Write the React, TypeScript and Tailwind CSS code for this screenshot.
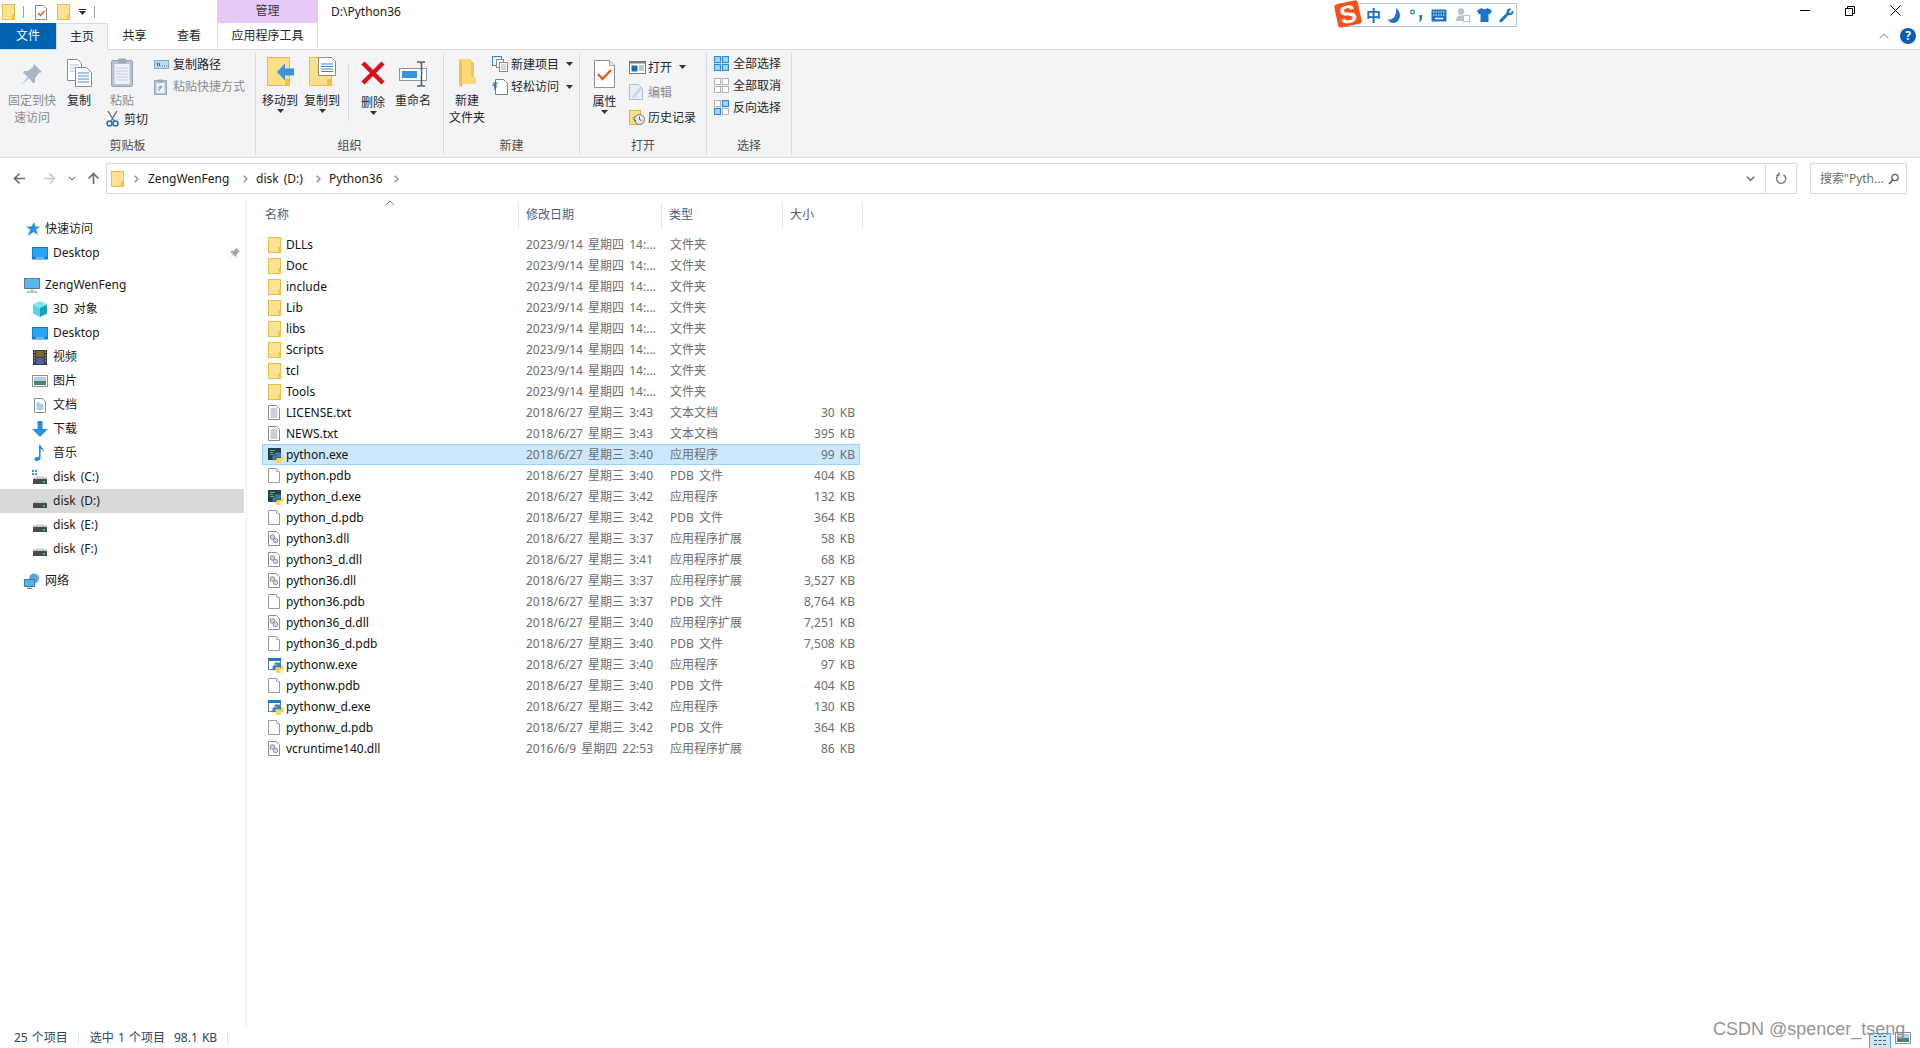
import React from "react";

const Folder = ({ w = 13, h = 16 }: { w?: number; h?: number }) => (
  <svg width={w} height={h} viewBox="0 0 13 16" className="shrink-0">
    <rect x="0.5" y="0.5" width="12" height="15" fill="#ffe293" stroke="#e6bc4a" />
    <rect x="10" y="10" width="2.5" height="5.5" fill="#f3c84f" />
  </svg>
);

const TxtIcon = () => (
  <svg width="12" height="15" viewBox="0 0 12 15" className="shrink-0">
    <path d="M.5.5h8l3 3v11H.5z" fill="#fff" stroke="#8a8a8a" />
    <path d="M2.5 4h7M2.5 6h7M2.5 8h7M2.5 10h7M2.5 12h7" stroke="#a0a0a0" />
  </svg>
);
const BlankIcon = () => (
  <svg width="12" height="15" viewBox="0 0 12 15" className="shrink-0">
    <path d="M.5.5h8l3 3v11H.5z" fill="#fff" stroke="#9a9a9a" />
    <path d="M8.5.5v3h3" fill="#f0f0f0" stroke="#b5b5b5" />
  </svg>
);
const DllIcon = () => (
  <svg width="12" height="15" viewBox="0 0 12 15" className="shrink-0">
    <path d="M.5.5h8l3 3v11H.5z" fill="#fff" stroke="#8e8e8e" />
    <circle cx="4.5" cy="6" r="2.3" fill="#d5d5d5" stroke="#8b8b8b" />
    <circle cx="7.5" cy="9.5" r="2.3" fill="#c9dcef" stroke="#8b97a5" />
  </svg>
);
const PyLogo = () => (
  <>
    <path d="M8 5.5h3.4c1 0 1.6.7 1.6 1.6V9c0 .9-.7 1.5-1.6 1.5H8.8c-1 0-1.6.7-1.6 1.6v1.2H5.8c-.9 0-1.3-.8-1.3-1.9v-1.2c0-1.1.6-1.9 1.6-1.9h3.3v-.6H6.6V6.6C6.6 5.9 7.2 5.5 8 5.5z" fill="#3e7fb8" />
    <path d="M13.4 8h1.1c.9 0 1.2.8 1.2 1.9v1.4c0 1.1-.6 1.8-1.6 1.8h-3.2v.6h2.3v1.2c0 .8-.7 1.1-1.6 1.1H9.6c-1 0-1.5-.6-1.5-1.5v-2c0-.9.6-1.4 1.5-1.4h2.3c1 0 1.5-.6 1.5-1.6z" fill="#ffd343" />
  </>
);
const PyExe = () => (
  <svg width="16" height="16" viewBox="0 0 16 16" className="shrink-0">
    <rect x="0" y="1" width="13" height="12" fill="#2b3c52" />
    <path d="M2 3.5h5M2 5.5h3M2 7.5h4" stroke="#47c94f" />
    <PyLogo />
  </svg>
);
const PywExe = () => (
  <svg width="16" height="16" viewBox="0 0 16 16" className="shrink-0">
    <rect x="0.5" y="1.5" width="12" height="11" fill="#fff" stroke="#6c7f96" />
    <rect x="0" y="1" width="13" height="3" fill="#1c78c9" />
    <PyLogo />
  </svg>
);

const Desktop = () => (
  <svg width="16" height="13" viewBox="0 0 16 13" className="shrink-0">
    <rect width="16" height="12.5" fill="#0b7bd4" />
    <path d="M1 1h14v9H1z" fill="#28a4f0" />
    <path d="M4 11h8" stroke="#cfe9fb" />
  </svg>
);
const ThisPC = () => (
  <svg width="16" height="15" viewBox="0 0 16 15" className="shrink-0">
    <rect x="0.5" y="0.5" width="15" height="10" fill="#5cb6ee" stroke="#5a7a96" />
    <path d="M8 11v2M3 14h10" stroke="#9aa7b3" strokeWidth="1.5" />
  </svg>
);
const Cube = () => (
  <svg width="16" height="16" viewBox="0 0 16 16" className="shrink-0">
    <path d="M8 0l7 3.5L8 7 1 3.5z" fill="#7fe5ee" />
    <path d="M1 3.5L8 7v9l-7-3.5z" fill="#58d3e2" />
    <path d="M15 3.5L8 7v9l7-3.5z" fill="#1a9fb8" />
  </svg>
);
const Film = () => (
  <svg width="14" height="15" viewBox="0 0 14 15" className="shrink-0">
    <rect width="14" height="15" fill="#3a3a3a" />
    <rect x="3" y="1" width="8" height="6" fill="#7a6a2a" />
    <rect x="3" y="8" width="8" height="6" fill="#4c5fb0" />
    <path d="M1 2h1M1 5h1M1 8h1M1 11h1M12 2h1M12 5h1M12 8h1M12 11h1" stroke="#e5e5e5" />
  </svg>
);
const Pic = () => (
  <svg width="16" height="12" viewBox="0 0 16 12" className="shrink-0">
    <rect x="0.5" y="0.5" width="15" height="11" fill="#fff" stroke="#8f8f8f" />
    <rect x="2" y="2" width="12" height="4" fill="#a9cfe9" />
    <path d="M2 6h12v4H2z" fill="#56806a" />
  </svg>
);
const DocIcon = () => (
  <svg width="12" height="15" viewBox="0 0 12 15" className="shrink-0">
    <path d="M.5.5h8l3 3v11H.5z" fill="#fff" stroke="#8a8a8a" />
    <path d="M2.5 5h3M2.5 7h7M2.5 9h7M2.5 11h7" stroke="#4ca5dc" />
  </svg>
);
const Down = () => (
  <svg width="16" height="16" viewBox="0 0 16 16" className="shrink-0">
    <path d="M5.5 0h5v8H16l-8 8-8-8h5.5z" fill="#2b8fdd" />
  </svg>
);
const Music = () => (
  <svg width="12" height="16" viewBox="0 0 12 16" className="shrink-0">
    <path d="M5 0h1.6c.3 2.5 4 3.5 3.4 7-.6-1.700-2-2.500-3.400-3v8.800C6.600 14.700 5 16 3 16s-2.500-1-2.500-2.100C.5 12.500 2.200 11.500 5 11.700z" fill="#1d8fe5" />
  </svg>
);
const Drive = ({ win }: { win?: boolean }) => (
  <svg width="16" height="16" viewBox="0 0 16 16" className="shrink-0">
    {win && <path d="M0 1h2v2H0zM3 1h2v2H3zM0 4h2v2H0zM3 4h2v2H3z" fill="#1ba1e2" />}
    <path d="M1 9c2-2 12-2 14 0v1H1z" fill="#c9c9c9" />
    <rect x="1" y="10" width="14" height="5" fill="#4a4a4a" />
    <rect x="11" y="12" width="2" height="1.500" fill="#5fd35f" />
  </svg>
);
const Star = () => (
  <svg width="16" height="16" viewBox="0 0 16 16" className="shrink-0">
    <path d="M10 1l1.500 4.500H16l-3.800 3L14 14l-4.300-3-6 4 2.500-6.500L2 5.500h5.500z" fill="#2a8fde" />
  </svg>
);
const Net = () => (
  <svg width="16" height="16" viewBox="0 0 16 16" className="shrink-0">
    <circle cx="10" cy="5.500" r="5" fill="#5aa6d8" />
    <rect x="0.500" y="6.500" width="10" height="7" fill="#4fb4ee" stroke="#3f7ea8" />
    <path d="M5.500 13.500v2M3 15.500h5" stroke="#7d8c98" />
  </svg>
);

const PinIcon = ({ w = 24, color = "#a9b5c6" }: { w?: number; color?: string }) => (
  <svg width={w} height={w} viewBox="0 0 24 24" className="shrink-0">
    <path d="M14 1l8 8-3 1-4 5 0 4-2 1-4-5-8 7 7-8-5-4 1-2h4l5-4z" fill={color} />
  </svg>
);
const CopyIcon = () => (
  <svg width="25" height="28" viewBox="0 0 25 28" className="shrink-0">
    <path d="M.5.500h10l4 4v17H.500z" fill="#fff" stroke="#8c8c8c" />
    <path d="M3 6h9M3 9h9M3 12h9" stroke="#9fbce0" />
    <path d="M8.500 8.500h11l5 5v14h-16z" fill="#fff" stroke="#8c8c8c" />
    <path d="M11 14h11M11 17h11M11 20h11M11 23h11" stroke="#4a86cf" />
  </svg>
);
const PasteIcon = () => (
  <svg width="22" height="29" viewBox="0 0 22 29" className="shrink-0">
    <rect x="0.500" y="2.500" width="21" height="26" rx="1.500" fill="#b7c3d4" stroke="#94a3b8" />
    <rect x="3.500" y="6" width="15" height="20" fill="#eef1f6" />
    <path d="M5 10h12M5 13h12M5 16h12M5 19h12M5 22h12" stroke="#c3cede" />
    <rect x="7" y="0.500" width="8" height="5" rx="1" fill="#9aa8ba" />
  </svg>
);
const Scissors = () => (
  <svg width="13" height="16" viewBox="0 0 13 16" className="shrink-0">
    <path d="M2 0l6 10M11 0L5 10" stroke="#6d6d6d" strokeWidth="1.300" fill="none" />
    <circle cx="3.500" cy="12.500" r="2.500" fill="none" stroke="#2272c9" strokeWidth="1.500" />
    <circle cx="9.500" cy="12.500" r="2.500" fill="none" stroke="#2272c9" strokeWidth="1.500" />
  </svg>
);
const PathIcon = () => (
  <svg width="15" height="9" viewBox="0 0 15 9" className="shrink-0">
    <rect x="0.500" y="0.500" width="14" height="8" fill="#bcdcf5" stroke="#7fa9cc" />
    <path d="M3 2.500l1 4M5 2.500l1 4M8 6h.8M10 6h.8M12 6h.8" stroke="#2b4a66" strokeWidth="0.900" />
  </svg>
);
const ShortcutIcon = () => (
  <svg width="13" height="16" viewBox="0 0 13 16" className="shrink-0">
    <rect x="0.500" y="1.500" width="12" height="14" fill="#b5c3d6" stroke="#98a8bd" />
    <rect x="2.500" y="4" width="8" height="10" fill="#eef1f6" />
    <rect x="4" y="0.500" width="5" height="3" fill="#98a8bd" />
    <path d="M5 12V8h3M6 7l2 1-2 2" stroke="#7f93ad" fill="none" />
  </svg>
);
const BigFolder = ({ children }: { children?: React.ReactNode }) => (
  <svg width="27" height="30" viewBox="0 0 27 30" className="shrink-0">
    <rect x="0.500" y="0.500" width="22" height="28" fill="#ffe08a" stroke="#e9bd47" />
    <rect x="18" y="22" width="4.500" height="6.500" fill="#f0c243" />
    {children}
  </svg>
);
const DeleteIcon = () => (
  <svg width="26" height="26" viewBox="0 0 26 26" className="mb-[3px] shrink-0">
    <path d="M3 3l20 20M23 3L3 23" stroke="#d90f1e" strokeWidth="4.500" />
  </svg>
);
const RenameIcon = () => (
  <svg width="28" height="26" viewBox="0 0 28 26" className="shrink-0">
    <rect x="0.500" y="7.500" width="27" height="12" fill="#fff" stroke="#8d959e" />
    <rect x="3" y="10" width="15" height="7" fill="#3393df" />
    <path d="M18 1h3l1 1 1-1h3M22.500 2v22M18 25h3l1-1 1 1h3" stroke="#5b5b5b" strokeWidth="1.500" fill="none" />
  </svg>
);
const NewFolderIcon = () => (
  <svg width="19" height="28" viewBox="0 0 19 28" className="shrink-0">
    <path d="M1 0h12v18h5v7H5l-1 3-3-2z" fill="#fcd977" />
    <path d="M1 0l3 2v26l-3-2z" fill="#f2c052" />
    <path d="M13 2l3 2v14h-3z" fill="#ecc565" />
  </svg>
);
const NewItemIcon = () => (
  <svg width="16" height="16" viewBox="0 0 16 16" className="shrink-0">
    <rect x="0.500" y="0.500" width="9" height="9" fill="#eaf3fb" stroke="#3f83bc" />
    <rect x="4.500" y="3.500" width="7" height="8" fill="#fff" stroke="#8a8a8a" />
    <rect x="7.500" y="6.500" width="8" height="9" fill="#fff" stroke="#8a8a8a" />
    <path d="M9 9h5M9 11h5M9 13h5" stroke="#d9a0a0" />
  </svg>
);
const EasyIcon = () => (
  <svg width="16" height="16" viewBox="0 0 16 16" className="shrink-0">
    <path d="M3.500.500h8l4 4v11h-12z" fill="#fff" stroke="#7d7d7d" />
    <path d="M0 6h5M2 8h3M1 4h5M3 4v7" stroke="#1d6cb3" fill="none" />
  </svg>
);
const PropsIcon = () => (
  <svg width="21" height="28" viewBox="0 0 21 28" className="shrink-0">
    <path d="M.500.500h15l5 5v22H.500z" fill="#fff" stroke="#8e8e8e" />
    <path d="M15.500.500v5h5" fill="#e8e8e8" stroke="#a5a5a5" />
    <path d="M4 14l4.500 5L17 10" stroke="#e8581c" strokeWidth="2.500" fill="none" />
  </svg>
);
const OpenIcon = () => (
  <svg width="17" height="13" viewBox="0 0 17 13" className="shrink-0">
    <rect x="0.500" y="0.500" width="16" height="12" fill="#fff" stroke="#7b7b7b" strokeWidth="1" />
    <rect x="0" y="0" width="17" height="2.500" fill="#7d7d7d" />
    <rect x="2.500" y="4.500" width="6" height="6" fill="#1c6ac0" />
    <path d="M10 5h5M10 7h5M10 9h5" stroke="#8d8d8d" />
  </svg>
);
const EditIcon = () => (
  <svg width="14" height="16" viewBox="0 0 14 16" className="shrink-0">
    <path d="M.500.500h9l4 4v11H.500z" fill="#e9eef6" stroke="#b0bdd2" />
    <path d="M3 13l8-10 2 1.500-8 10z" fill="#c9d6ea" />
  </svg>
);
const HistoryIcon = () => (
  <svg width="16" height="15" viewBox="0 0 16 15" className="shrink-0">
    <rect x="0.500" y="0.500" width="11" height="14" fill="#ffe08a" stroke="#e2b63e" />
    <circle cx="10.500" cy="9.500" r="5" fill="#e6e6e6" stroke="#7a7a7a" />
    <path d="M10.500 6.500v3l2 1" stroke="#555" fill="none" />
    <path d="M3 9c1-2.500 3-3 5-3v-1l-5 4 4 3v-2" fill="#37a13a" />
  </svg>
);
const Grid4 = ({ cells }: { cells: boolean[] }) => (
  <svg width="15" height="15" viewBox="0 0 15 15" className="shrink-0">
    {[[0, 0], [8, 0], [0, 8], [8, 8]].map(([x, y], i) => (
      <rect key={i} x={x + 0.5} y={y + 0.5} width="6" height="6" fill={cells[i] ? "#a7d7f7" : "#fff"} stroke={cells[i] ? "#2c8be0" : "#b3b3b3"} strokeWidth={cells[i] ? 1.200 : 1} />
    ))}
  </svg>
);
const Caret = () => (
  <svg width="7" height="4" viewBox="0 0 7 4" className="shrink-0">
    <path d="M0 0h7L3.500 4z" fill="#333" />
  </svg>
);
const Chev = ({ color = "#8a8a8a" }: { color?: string }) => (
  <svg width="5" height="8" viewBox="0 0 5 8" className="shrink-0">
    <path d="M.7.700L4 4 .7 7.300" fill="none" stroke={color} strokeWidth="1.300" />
  </svg>
);
const Arrow = ({ color, rot }: { color: string; rot: string }) => (
  <svg width="13" height="13" viewBox="0 0 13 13" className={`shrink-0 ${rot}`}>
    <path d="M6.500 12V1.500M1.500 6.500l5-5 5 5" stroke={color} strokeWidth="1.700" fill="none" />
  </svg>
);

const Big = ({ w, icon, lines, caret, dim, h = "h-[34px]" }: { w: string; icon: React.ReactNode; lines: string[]; caret?: boolean; dim?: boolean; h?: string }) => (
  <div className={`flex flex-col items-center ${w}`}>
    <div className={`flex ${h} items-end justify-center`}>{icon}</div>
    <div className={`mt-[5px] text-center leading-[17px] whitespace-nowrap ${dim ? "text-[#8b8b8b]" : "text-[#262626]"}`}>
      {lines.map((l) => (
        <div key={l}>{l}</div>
      ))}
    </div>
    {caret && <Caret />}
  </div>
);
const Small = ({ icon, text, dim, caret, cls }: { icon: React.ReactNode; text: string; dim?: boolean; caret?: boolean; cls: string }) => (
  <div className={`flex items-center ${cls} ${dim ? "text-[#8b8b8b]" : "text-[#262626]"}`}>
    <div className="flex w-[19px] shrink-0 items-center">{icon}</div>
    <span className="whitespace-nowrap leading-[17px]">{text}</span>
    {caret && (
      <span className="ml-[7px] flex">
        <Caret />
      </span>
    )}
  </div>
);
const Group = ({ w, label, children }: { w: string; label: string; children: React.ReactNode }) => (
  <div className={`relative flex h-[102px] shrink-0 flex-col border-r border-[#dadbdc] ${w}`}>
    <div className="flex flex-1">{children}</div>
    <div className="pb-[1px] text-center leading-[17px] text-[#4c4c4c]">{label}</div>
  </div>
);

type F = [string, string, string, string, string];
const D1 = "2023/9/14 星期四 14:...";
const files: F[] = [
  ["f", "DLLs", D1, "文件夹", ""],
  ["f", "Doc", D1, "文件夹", ""],
  ["f", "include", D1, "文件夹", ""],
  ["f", "Lib", D1, "文件夹", ""],
  ["f", "libs", D1, "文件夹", ""],
  ["f", "Scripts", D1, "文件夹", ""],
  ["f", "tcl", D1, "文件夹", ""],
  ["f", "Tools", D1, "文件夹", ""],
  ["t", "LICENSE.txt", "2018/6/27 星期三 3:43", "文本文档", "30 KB"],
  ["t", "NEWS.txt", "2018/6/27 星期三 3:43", "文本文档", "395 KB"],
  ["e", "python.exe", "2018/6/27 星期三 3:40", "应用程序", "99 KB"],
  ["b", "python.pdb", "2018/6/27 星期三 3:40", "PDB 文件", "404 KB"],
  ["e", "python_d.exe", "2018/6/27 星期三 3:42", "应用程序", "132 KB"],
  ["b", "python_d.pdb", "2018/6/27 星期三 3:42", "PDB 文件", "364 KB"],
  ["d", "python3.dll", "2018/6/27 星期三 3:37", "应用程序扩展", "58 KB"],
  ["d", "python3_d.dll", "2018/6/27 星期三 3:41", "应用程序扩展", "68 KB"],
  ["d", "python36.dll", "2018/6/27 星期三 3:37", "应用程序扩展", "3,527 KB"],
  ["b", "python36.pdb", "2018/6/27 星期三 3:37", "PDB 文件", "8,764 KB"],
  ["d", "python36_d.dll", "2018/6/27 星期三 3:40", "应用程序扩展", "7,251 KB"],
  ["b", "python36_d.pdb", "2018/6/27 星期三 3:40", "PDB 文件", "7,508 KB"],
  ["w", "pythonw.exe", "2018/6/27 星期三 3:40", "应用程序", "97 KB"],
  ["b", "pythonw.pdb", "2018/6/27 星期三 3:40", "PDB 文件", "404 KB"],
  ["w", "pythonw_d.exe", "2018/6/27 星期三 3:42", "应用程序", "130 KB"],
  ["b", "pythonw_d.pdb", "2018/6/27 星期三 3:42", "PDB 文件", "364 KB"],
  ["d", "vcruntime140.dll", "2016/6/9 星期四 22:53", "应用程序扩展", "86 KB"],
];
const FileIcon = ({ k }: { k: string }) => {
  if (k === "f") return <Folder />;
  if (k === "t") return <TxtIcon />;
  if (k === "e") return <PyExe />;
  if (k === "w") return <PywExe />;
  if (k === "d") return <DllIcon />;
  return <BlankIcon />;
};

const Nav = ({ icon, text, indent, sel, extra, cls = "" }: { icon: React.ReactNode; text: string; indent: string; sel?: boolean; extra?: React.ReactNode; cls?: string }) => (
  <div className={`relative flex h-[24px] items-center ${indent} ${sel ? "bg-[#d9d9d9]" : ""} ${cls}`}>
    <div className="flex w-[16px] shrink-0 justify-center">{icon}</div>
    <span className="ml-[5px] whitespace-nowrap text-[#1a1a1a]">{text}</span>
    {extra}
  </div>
);

export default function App() {
  return (
    <div className="relative flex h-[1048px] w-[1920px] flex-col overflow-hidden bg-white font-['Noto_Sans','Noto_Sans_CJK_SC',sans-serif] text-[12px] text-[#1a1a1a] [word-spacing:2px]">
      {/* title bar */}
      <div className="flex h-[23px] shrink-0 items-start">
        <div className="flex w-[217px] items-center pt-[4px] pl-[2px]">
          <Folder />
          <div className="ml-[8px] h-[12px] w-px bg-[#a0a0a0]" />
          <div className="ml-[11px] flex">
            <svg width="12" height="15" viewBox="0 0 12 15">
              <path d="M.5.5h8l3 3v11H.5z" fill="#fff" stroke="#8a8a8a" />
              <path d="M3 8l2.500 2.500L9.500 6" stroke="#e8581c" strokeWidth="1.500" fill="none" />
            </svg>
          </div>
          <div className="ml-[10px] flex">
            <Folder />
          </div>
          <div className="ml-[9px] flex flex-col items-center gap-[1px]">
            <div className="h-px w-[7px] bg-[#222]" />
            <Caret />
          </div>
          <div className="ml-[8px] h-[12px] w-px bg-[#a0a0a0]" />
        </div>
        <div className="flex h-[23px] w-[101px] items-center justify-center bg-[#e6c9f5] pb-[2px] text-[#3a3a3a]">管理</div>
        <div className="ml-[13px] pt-[3px] leading-[17px] text-[#1a1a1a]">D:\Python36</div>
        <div className="ml-auto flex pr-[2px]">
          <div className="flex h-[21px] w-[45px] items-center justify-center">
            <div className="h-px w-[10px] bg-black" />
          </div>
          <div className="flex h-[21px] w-[46px] items-center justify-center">
            <svg width="10" height="10" viewBox="0 0 10 10">
              <path d="M.5 2.500h7v7h-7zM2.500 2.500v-2h7v7h-2" fill="none" stroke="#000" />
            </svg>
          </div>
          <div className="flex h-[21px] w-[45px] items-center justify-center">
            <svg width="11" height="11" viewBox="0 0 11 11">
              <path d="M.5.500l10 10M10.500.500l-10 10" stroke="#000" />
            </svg>
          </div>
        </div>
      </div>

      {/* tabs */}
      <div className="relative z-10 flex h-[26px] shrink-0 items-stretch">
        <div className="flex w-[56px] items-center justify-center bg-[#0063b1] text-white">文件</div>
        <div className="mb-[-1px] flex w-[52px] items-center justify-center border-x border-t border-[#dadbdc] bg-[#f3f4f6] text-[#262626]">主页</div>
        <div className="flex w-[53px] items-center justify-center text-[#262626]">共享</div>
        <div className="flex w-[56px] items-center justify-center text-[#262626]">查看</div>
        <div className="flex w-[101px] items-center justify-center border-x border-[#dadbdc] text-[#262626]">应用程序工具</div>
        <div className="ml-auto flex items-center pr-[4px]">
          <svg width="10" height="6" viewBox="0 0 10 6">
            <path d="M.7 5.300L5 1l4.300 4.300" stroke="#a8a8a8" fill="none" strokeWidth="1.200" />
          </svg>
          <div className="ml-[11px] flex h-[16px] w-[16px] items-center justify-center rounded-full bg-[#0a5fb4] text-[12px] font-bold leading-none text-white">?</div>
        </div>
      </div>

      {/* ribbon */}
      <div className="flex h-[109px] shrink-0 items-center border-y border-[#dadbdc] bg-[#f3f4f6]">
        <Group w="w-[256px]" label="剪贴板">
          <Big w="w-[64px]" dim icon={<PinIcon />} lines={["固定到快", "速访问"]} />
          <Big w="w-[30px]" icon={<CopyIcon />} lines={["复制"]} />
          <div className="flex w-[60px] flex-col items-start">
            <div className="pl-[16px]">
              <Big w="w-[24px]" dim icon={<PasteIcon />} lines={["粘贴"]} />
            </div>
            <div className="mt-[2px] flex items-center pl-[12px]">
              <Scissors />
              <span className="ml-[5px] leading-[17px] text-[#262626]">剪切</span>
            </div>
          </div>
          <div className="flex flex-col">
            <Small cls="h-[23px]" icon={<PathIcon />} text="复制路径" />
            <Small cls="h-[22px]" dim icon={<ShortcutIcon />} text="粘贴快捷方式" />
          </div>
        </Group>
        <Group w="w-[188px]" label="组织">
          <div className="w-[3px]" />
          <Big
            w="w-[42px]"
            caret
            icon={
              <BigFolder>
                <path d="M27 11.500v7h-9v5L10 15l8-8.500v5z" fill="#3a93dc" />
              </BigFolder>
            }
            lines={["移动到"]}
          />
          <Big
            w="w-[42px]"
            caret
            icon={
              <BigFolder>
                <path d="M9.500.500h13l4 4v14h-17z" fill="#fff" stroke="#8a8a8a" />
                <path d="M12 7h12M12 9.500h12M12 12h12M12 14.500h12" stroke="#3f80c8" />
              </BigFolder>
            }
            lines={["复制到"]}
          />
          <div className="mt-[12px] mr-[4px] ml-[5px] h-[56px] w-px bg-[#dadbdc]" />
          <Big w="w-[40px]" caret h="h-[36px]" icon={<DeleteIcon />} lines={["删除"]} />
          <Big w="w-[40px]" icon={<RenameIcon />} lines={["重命名"]} />
        </Group>
        <Group w="w-[136px]" label="新建">
          <Big w="w-[46px]" icon={<NewFolderIcon />} lines={["新建", "文件夹"]} />
          <div className="ml-[2px] flex flex-col">
            <Small cls="h-[23px]" caret icon={<NewItemIcon />} text="新建项目" />
            <Small cls="h-[22px]" caret icon={<EasyIcon />} text="轻松访问" />
          </div>
        </Group>
        <Group w="w-[127px]" label="打开">
          <Big w="w-[49px]" caret h="h-[35px]" icon={<PropsIcon />} lines={["属性"]} />
          <div className="flex flex-col pt-[2px]">
            <Small cls="h-[25px]" caret icon={<OpenIcon />} text="打开" />
            <Small cls="h-[25px]" dim icon={<EditIcon />} text="编辑" />
            <Small cls="h-[26px]" icon={<HistoryIcon />} text="历史记录" />
          </div>
        </Group>
        <Group w="w-[85px]" label="选择">
          <div className="flex flex-col pl-[7px]">
            <Small cls="h-[22px]" icon={<Grid4 cells={[true, true, true, true]} />} text="全部选择" />
            <Small cls="h-[22px]" icon={<Grid4 cells={[false, false, false, false]} />} text="全部取消" />
            <Small cls="h-[22px]" icon={<Grid4 cells={[false, true, true, false]} />} text="反向选择" />
          </div>
        </Group>
      </div>

      {/* address row */}
      <div className="flex h-[42px] shrink-0 items-start pt-[5px]">
        <div className="flex h-[30px] w-[106px] shrink-0 items-center pl-[13px]">
          <Arrow color="#6e6e6e" rot="-rotate-90" />
          <div className="ml-[17px] flex">
            <Arrow color="#c8c8c8" rot="rotate-90" />
          </div>
          <svg width="8" height="5" viewBox="0 0 8 5" className="ml-[12px]">
            <path d="M.7.700L4 4 7.300.700" fill="none" stroke="#8a8a8a" strokeWidth="1.200" />
          </svg>
          <div className="ml-[11px] flex">
            <Arrow color="#6e6e6e" rot="" />
          </div>
        </div>
        <div className="flex h-[31px] w-[1691px] shrink-0 items-center border border-[#d9d9d9] pl-[4px]">
          <Folder />
          <div className="ml-[10px] flex">
            <Chev />
          </div>
          <span className="ml-[9px] w-[82px] whitespace-nowrap text-[#1a1a1a]">ZengWenFeng</span>
          <div className="ml-[13px] flex">
            <Chev />
          </div>
          <span className="ml-[8px] w-[48px] whitespace-nowrap text-[#1a1a1a]">disk (D:)</span>
          <div className="ml-[12px] flex">
            <Chev />
          </div>
          <span className="ml-[8px] w-[53px] whitespace-nowrap text-[#1a1a1a]">Python36</span>
          <div className="ml-[12px] flex">
            <Chev />
          </div>
          <div className="ml-auto flex h-full items-center">
            <svg width="9" height="6" viewBox="0 0 9 6" className="mr-[10px]">
              <path d="M.8.800L4.500 4.500 8.200.800" fill="none" stroke="#6a6a6a" strokeWidth="1.500" />
            </svg>
            <div className="flex h-full w-[31px] items-center justify-center border-l border-[#d9d9d9]">
              <svg width="11" height="13" viewBox="0 0 11 13">
                <path d="M7.500 2.800A4.600 4.600 0 1 1 3 2.700M3 .3v2.700H.5" fill="none" stroke="#7a7a7a" strokeWidth="1.400" />
              </svg>
            </div>
          </div>
        </div>
        <div className="ml-[13px] flex h-[31px] w-[97px] shrink-0 items-center justify-between border border-[#d9d9d9] pr-[7px] pl-[9px] text-[#6d6d6d]">
          <span className="whitespace-nowrap">搜索"Pyth...</span>
          <svg width="11" height="12" viewBox="0 0 11 12">
            <circle cx="7" cy="4.500" r="3.200" fill="none" stroke="#5f5f5f" strokeWidth="1.300" />
            <path d="M4.700 7L1 11" stroke="#5f5f5f" strokeWidth="1.600" />
          </svg>
        </div>
      </div>

      {/* main */}
      <div className="flex min-h-0 flex-1">
        <div className="w-[247px] shrink-0 border-r border-[#eeeeee] pt-[17px] pr-[2px]">
          <Nav indent="pl-[24px]" icon={<Star />} text="快速访问" />
          <Nav
            indent="pl-[32px]"
            icon={<Desktop />}
            text="Desktop"
            extra={
              <span className="absolute left-[229px] top-[6px] flex">
                <PinIcon w={12} color="#a0a6ad" />
              </span>
            }
          />
          <Nav indent="pl-[24px]" cls="mt-[8px]" icon={<ThisPC />} text="ZengWenFeng" />
          <Nav indent="pl-[32px]" icon={<Cube />} text="3D 对象" />
          <Nav indent="pl-[32px]" icon={<Desktop />} text="Desktop" />
          <Nav indent="pl-[32px]" icon={<Film />} text="视频" />
          <Nav indent="pl-[32px]" icon={<Pic />} text="图片" />
          <Nav indent="pl-[32px]" icon={<DocIcon />} text="文档" />
          <Nav indent="pl-[32px]" icon={<Down />} text="下载" />
          <Nav indent="pl-[32px]" icon={<Music />} text="音乐" />
          <Nav indent="pl-[32px]" icon={<Drive win />} text="disk (C:)" />
          <Nav indent="pl-[32px]" sel icon={<Drive />} text="disk (D:)" />
          <Nav indent="pl-[32px]" icon={<Drive />} text="disk (E:)" />
          <Nav indent="pl-[32px]" icon={<Drive />} text="disk (F:)" />
          <Nav indent="pl-[24px]" cls="mt-[8px]" icon={<Net />} text="网络" />
        </div>
        <div className="relative min-w-0 flex-1 pt-[2px] pl-[15px]">
          <svg width="10" height="6" viewBox="0 0 10 6" className="absolute left-[138px] top-0">
            <path d="M.7 5.300L5 1l4.300 4.300" stroke="#8a8a8a" fill="none" />
          </svg>
          <div className="grid h-[26px] w-[601px] grid-cols-[257px_143px_121px_80px] text-[#4c607a]">
            <div className="flex items-center border-r border-[#e5e5e5] pl-[3px]">名称</div>
            <div className="flex items-center border-r border-[#e5e5e5] pl-[7px]">修改日期</div>
            <div className="flex items-center border-r border-[#e5e5e5] pl-[7px]">类型</div>
            <div className="flex items-center border-r border-[#e5e5e5] pl-[7px]">大小</div>
          </div>
          <div className="mt-[6px] flex w-[598px] flex-col">
            {files.map(([k, name, date, type, size]) => (
              <div
                key={name}
                className={`grid h-[21px] grid-cols-[263px_144px_119px_66px] items-center border ${name === "python.exe" ? "border-[#99d1ff] bg-[#cce8ff]" : "border-transparent"} pr-[4px]`}
              >
                <div className="flex items-center pl-[5px]">
                  <div className="flex w-[18px] shrink-0">
                    <FileIcon k={k} />
                  </div>
                  <span className="whitespace-nowrap text-[#111]">{name}</span>
                </div>
                <div className="whitespace-nowrap text-[#6d6d6d]">{date}</div>
                <div className="whitespace-nowrap text-[#6d6d6d]">{type}</div>
                <div className="whitespace-nowrap text-right text-[#6d6d6d]">{size}</div>
              </div>
            ))}
          </div>
        </div>
      </div>

      {/* status */}
      <div className="flex h-[21px] shrink-0 items-center pl-[14px] text-[#2b4560] [word-spacing:1px]">
        <span className="whitespace-nowrap">25 个项目</span>
        <div className="ml-[10px] mr-[11px] h-[13px] w-px bg-[#e5e5e5]" />
        <span className="whitespace-nowrap">选中 1 个项目</span>
        <span className="ml-[9px] whitespace-nowrap">98.1 KB</span>
        <div className="ml-[10px] h-[13px] w-px bg-[#e5e5e5]" />
        <div className="ml-auto flex items-end self-end pr-[9px]">
          <div className="flex h-[15px] w-[22px] flex-col justify-center gap-[2px] border-x border-t border-[#52a7e6] bg-[#cce8ff] px-[4px]">
            <div className="h-[2px] w-full border-t border-dashed border-[#555]" />
            <div className="h-[2px] w-full border-t border-dashed border-[#555]" />
            <div className="h-[2px] w-full border-t border-dashed border-[#555]" />
          </div>
          <div className="mb-[4px] ml-[4px] flex">
            <Pic />
          </div>
        </div>
      </div>

      {/* input-method bar */}
      <div className="absolute left-[1338px] top-[3px] flex h-[24px] w-[179px] items-center border border-[#b4c6dc] bg-white pl-[27px] text-[#1b74c8]">
        <span className="font-['Noto_Sans_CJK_SC',sans-serif] text-[15px] font-bold leading-[20px]">中</span>
        <svg width="14" height="15" viewBox="0 0 14 15" className="ml-[7px]">
          <path d="M8 0c6 4 5 14-2 15C3 15 1 14 0 11c5 2 9-4 8-11z" fill="#1b74c8" />
        </svg>
        <svg width="13" height="13" viewBox="0 0 13 13" className="ml-[8px]">
          <circle cx="2.500" cy="3" r="1.800" fill="none" stroke="#1b74c8" strokeWidth="1.200" />
          <path d="M9.500 6h2.500v3c0 2-1 3-2.500 4l-.5-1c.7-.4 1-1 1-2H9.500z" fill="#1b74c8" />
        </svg>
        <svg width="16" height="13" viewBox="0 0 16 13" className="ml-[8px]">
          <rect x="0.500" y="0.500" width="15" height="12" rx="1" fill="#1b74c8" />
          <path d="M2 3h12M2 6h12" stroke="#fff" strokeDasharray="1.500 1" />
          <path d="M4 9.500h8" stroke="#fff" strokeWidth="1.500" />
        </svg>
        <svg width="14" height="14" viewBox="0 0 14 14" className="ml-[9px]">
          <circle cx="5" cy="3.500" r="3.200" fill="#b5c3d3" />
          <path d="M0 13c0-4 2-5.500 5-5.500S8 8 8 9v4z" fill="#b5c3d3" />
          <rect x="7.500" y="7.500" width="6" height="6" fill="#fff" stroke="#b5c3d3" />
        </svg>
        <svg width="15" height="14" viewBox="0 0 15 14" className="ml-[7px]">
          <path d="M4.500 0c1 1.500 5 1.500 6 0L15 2.500 13 6.500l-1.500-.7V14h-8V5.800L2 6.500 0 2.500z" fill="#1b74c8" />
        </svg>
        <svg width="15" height="15" viewBox="0 0 15 15" className="ml-[7px]">
          <path d="M14 2.500l-2.800 2.800-1.500-1.500L12.500 1C10 -.500 7 1.500 7.500 5L.5 12c-.8 1 1.200 3 2.200 2.300l7-7.200c3.300.7 5.800-2 4.300-4.600z" fill="#1b74c8" />
        </svg>
      </div>
      <div className="absolute left-[1336px] top-[2px] flex h-[24px] w-[24px] -rotate-12 items-center justify-center rounded-[3px] bg-[#f4511e] font-['Liberation_Sans',sans-serif] text-[25px] font-bold leading-[24px] text-white">
        S
      </div>

      {/* watermark */}
      <div className="absolute left-[1713px] top-[1018px] font-['Liberation_Sans',sans-serif] text-[18px] leading-[22px] whitespace-nowrap text-[#8a8a8a] opacity-90 [word-spacing:0px]">
        CSDN @spencer_tseng
      </div>
    </div>
  );
}
